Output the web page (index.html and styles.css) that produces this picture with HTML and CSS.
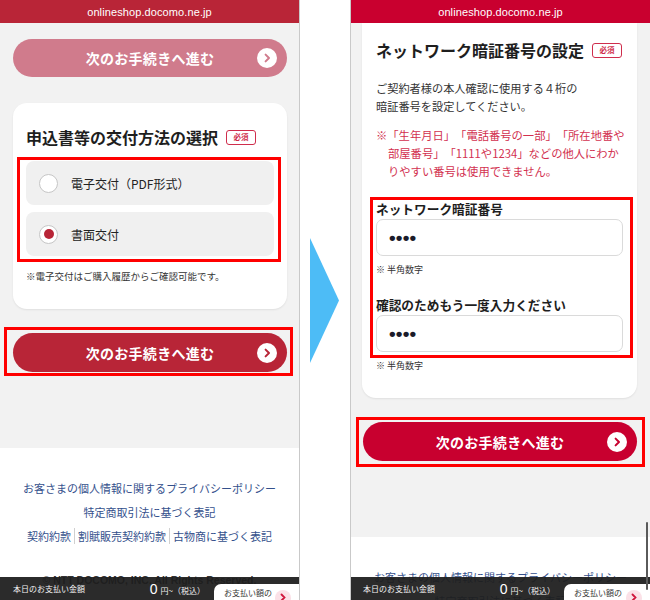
FILE: index.html
```html
<!DOCTYPE html>
<html lang="ja">
<head>
<meta charset="utf-8">
<title>docomo online shop</title>
<link rel="stylesheet" href="styles.css">
</head>
<body>
<div class="stage">
  <section class="phone phone-a">
    <header class="urlbar">onlineshop.docomo.ne.jp</header>
    <div class="content content-a">
      <button class="next faded" type="button">
        <span class="next-label">次のお手続きへ進む</span>
        <svg class="next-icon" viewBox="0 0 20 20" width="20" height="20"><circle cx="10" cy="10" r="10" fill="#fff"/><path d="M8.6 6.6 L12 10 L8.6 13.4" fill="none" stroke="currentColor" stroke-width="2" stroke-linecap="round" stroke-linejoin="round"/></svg>
      </button>
      <div class="card card-a">
        <h2 class="card-title">申込書等の交付方法の選択<span class="req">必須</span></h2>
        <div class="mark mark-options">
          <label class="option"><span class="radio"></span>電子交付（PDF形式）</label>
          <label class="option"><span class="radio on"></span>書面交付</label>
        </div>
        <p class="small-note">※電子交付はご購入履歴からご確認可能です。</p>
      </div>
      <div class="mark mark-btn-a">
        <button class="next main-a" type="button">
          <span class="next-label">次のお手続きへ進む</span>
          <svg class="next-icon" viewBox="0 0 20 20" width="20" height="20"><circle cx="10" cy="10" r="10" fill="#fff"/><path d="M8.6 6.6 L12 10 L8.6 13.4" fill="none" stroke="currentColor" stroke-width="2" stroke-linecap="round" stroke-linejoin="round"/></svg>
        </button>
      </div>
    </div>
    <footer class="site-footer">
      <p class="f-line"><a>お客さまの個人情報に関するプライバシーポリシー</a></p>
      <p class="f-line"><a>特定商取引法に基づく表記</a></p>
      <p class="f-line"><a>契約約款</a><span class="sep"></span><a>割賦販売契約約款</a><span class="sep"></span><a>古物商に基づく表記</a></p>
      <p class="copy">© NTT DOCOMO, INC. All Rights Reserved.</p>
    </footer>
    <div class="paybar">
      <span class="pay-label">本日のお支払い金額</span>
      <span class="pay-price"><b>0</b> 円~（税込）</span>
      <span class="pay-tab">お支払い額の<span class="pay-go"><svg viewBox="0 0 16 16" width="16" height="16"><path d="M6.5 4.5 L9.5 7.5 L6.5 10.5" fill="none" stroke="#d0163c" stroke-width="1.8" stroke-linecap="round"/></svg></span></span>
    </div>
  </section>

  <div class="arrow">
    <svg viewBox="0 0 29 125" width="29" height="125"><polygon points="0,0 29,62.5 0,125" fill="#4dbcf6"/></svg>
  </div>

  <section class="phone phone-b">
    <header class="urlbar">onlineshop.docomo.ne.jp</header>
    <div class="content content-b">
      <div class="card card-b">
        <h2 class="card-title">ネットワーク暗証番号の設定<span class="req">必須</span></h2>
        <p class="desc">ご契約者様の本人確認に使用する４桁の<br>暗証番号を設定してください。</p>
        <p class="warn">※「生年月日」「電話番号の一部」「所在地番や<br>部屋番号」「1111や1234」などの他人にわか<br>りやすい番号は使用できません。</p>
        <div class="mark mark-fields">
          <p class="field-label">ネットワーク暗証番号</p>
          <div class="field"><span class="dots">••••</span></div>
          <p class="help">※ 半角数字</p>
          <p class="field-label second">確認のためもう一度入力ください</p>
          <div class="field"><span class="dots">••••</span></div>
        </div>
        <p class="help help-out">※ 半角数字</p>
      </div>
      <div class="mark mark-btn-b">
        <button class="next main-b" type="button">
          <span class="next-label">次のお手続きへ進む</span>
          <svg class="next-icon" viewBox="0 0 20 20" width="20" height="20"><circle cx="10" cy="10" r="10" fill="#fff"/><path d="M8.6 6.6 L12 10 L8.6 13.4" fill="none" stroke="currentColor" stroke-width="2" stroke-linecap="round" stroke-linejoin="round"/></svg>
        </button>
      </div>
    </div>
    <footer class="site-footer">
      <p class="f-line"><a>お客さまの個人情報に関するプライバシーポリシー</a></p>
      <p class="f-line"><a>特定商取引法に基づく表記</a></p>
    </footer>
    <div class="paybar">
      <span class="pay-label">本日のお支払い金額</span>
      <span class="pay-price"><b>0</b> 円~（税込）</span>
      <span class="pay-tab">お支払い額の<span class="pay-go"><svg viewBox="0 0 16 16" width="16" height="16"><path d="M6.5 4.5 L9.5 7.5 L6.5 10.5" fill="none" stroke="#d0163c" stroke-width="1.8" stroke-linecap="round"/></svg></span></span>
    </div>
    <div class="scrollbar"></div>
  </section>
</div>
</body>
</html>
```

FILE: styles.css
```css
* { box-sizing: border-box; }
html, body { margin: 0; padding: 0; }
body {
  width: 650px;
  height: 600px;
  overflow: hidden;
  background: #fff;
  font-family: "Noto Sans CJK JP", "Noto Sans", sans-serif;
  color: #222;
  text-spacing-trim: space-all;
}
p, h2 { margin: 0; }

.stage { display: flex; width: 650px; height: 600px; }

.phone {
  position: relative;
  width: 300px;
  height: 600px;
  overflow: hidden;
  background: #f2f2f2;
  display: flex;
  flex-direction: column;
  flex: none;
}
.phone-a { border-right: 1px solid #c9c9c9; }
.phone-b { border-left: 1px solid #c9c9c9; }

.urlbar {
  flex: none;
  height: 23px;
  display: flex;
  align-items: center;
  justify-content: center;
  color: #fff;
  font: 11px "Liberation Sans", Arial, sans-serif;
  letter-spacing: 0.1px;
}
.phone-a .urlbar { background: #b92537; }
.phone-b .urlbar { background: #c9002f; }

.arrow {
  width: 50px;
  flex: none;
  display: flex;
  align-items: center;
  padding-left: 10px;
}

/* content columns */
.content { flex: none; }
.content-a { padding: 16px 12px 72px 13px; }
.content-b { padding: 0 13px 70px 11px; }

/* buttons */
.next {
  display: grid;
  grid-template-columns: 1fr auto 1fr;
  align-items: center;
  width: 100%;
  border: 0;
  padding: 0 10px;
  color: #fff;
  font: 700 14px "Noto Sans CJK JP", sans-serif;
  letter-spacing: 0.3px;
}
.next-label { grid-column: 2; }
.next-icon { grid-column: 3; justify-self: end; display: block; }
.faded { height: 38px; border-radius: 19px; background: #d07b8c; color: #fff; }
.faded .next-icon { color: #d07b8c; }
.main-a { height: 39px; border-radius: 20px; background: #b82537; }
.main-a .next-icon { color: #b82537; }
.main-b { height: 39px; border-radius: 20px; background: #c8002f; }
.main-b .next-icon { color: #c8002f; }

/* cards */
.card {
  background: #fff;
  box-shadow: 0 1px 2px rgba(0, 0, 0, 0.08);
}
.card-a {
  margin-top: 26px;
  border-radius: 14px;
  padding: 24px 13px 26px 13px;
}
.card-b {
  border-radius: 0 0 14px 14px;
  padding: 17px 14px 25px 14px;
}
.card-title {
  display: flex;
  align-items: center;
  gap: 8px;
  font-size: 16px;
  line-height: 20px;
  font-weight: 700;
  color: #1e1e1e;
  white-space: nowrap;
}
.req {
  display: inline-flex;
  align-items: center;
  justify-content: center;
  width: 30px;
  height: 15px;
  border: 1.5px solid #cf2d4c;
  border-radius: 3px;
  color: #cf2d4c;
  font-size: 7.5px;
  font-weight: 700;
  line-height: 1;
  background: #fff;
}

/* red highlight frames */
.mark { border: 3px solid #ff0000; }
.mark-options {
  margin: 10px -7px 0 -9px;
  padding: 1px 4px 3px 6px;
  display: flex;
  flex-direction: column;
  gap: 7px;
}
.mark-btn-a {
  margin: 18px -6px 0 -9px;
  padding: 3px 3px 1px 6px;
}
.mark-fields {
  margin: 17px -10px 0 -6px;
  padding: 0 7px 3px 3px;
}
.mark-btn-b {
  margin: 19px -8px 0 -6px;
  padding: 2px 5px 3px 4px;
}

/* radio options */
.option {
  display: flex;
  align-items: center;
  gap: 13px;
  height: 44px;
  padding-left: 13px;
  background: #f0f0f0;
  border-radius: 8px;
  font-size: 12px;
  color: #222;
}
.radio {
  width: 19px;
  height: 19px;
  border: 1.5px solid #c6c6c6;
  border-radius: 50%;
  background: #fff;
  display: grid;
  place-items: center;
}
.radio.on::after {
  content: "";
  width: 10px;
  height: 10px;
  border-radius: 50%;
  background: #b82537;
}
.small-note {
  margin-top: 7px;
  font-size: 9.5px;
  line-height: 14px;
  color: #333;
  white-space: nowrap;
}

/* right form */
.desc {
  margin-top: 19px;
  font-size: 11.2px;
  line-height: 18px;
  color: #333;
  white-space: nowrap;
}
.warn {
  margin-top: 11px;
  font-size: 11.3px;
  line-height: 18px;
  color: #d2314f;
  padding-left: 12px;
  text-indent: -12px;
  white-space: nowrap;
}
.field-label {
  font-size: 12.7px;
  font-weight: 700;
  line-height: 18px;
  color: #1e1e1e;
  white-space: nowrap;
}
.field-label.second { margin-top: 19px; }
.field {
  margin-top: 1px;
  height: 37px;
  border: 1.5px solid #dadada;
  border-radius: 7px;
  background: #fff;
  display: flex;
  align-items: center;
  padding-left: 12px;
}
.dots {
  font: 700 19px "Liberation Sans", Arial, sans-serif;
  color: #1b1b2a;
  letter-spacing: 0.2px;
  line-height: 1;
}
.help {
  margin-top: 7px;
  font-size: 9px;
  line-height: 14px;
  color: #333;
}
.help-out { margin-top: 1px; }

/* footer */
.site-footer {
  flex: 1 0 auto;
  background: #fff;
  padding-top: 28px;
  text-align: center;
}
.f-line {
  display: flex;
  justify-content: center;
  align-items: center;
  font-size: 11px;
  line-height: 24px;
  color: #34508c;
  white-space: nowrap;
}
.sep {
  width: 1px;
  height: 16px;
  background: #d0d0d0;
  margin: 0 3px;
}
.copy {
  margin-top: 25px;
  font: 700 10.5px/14px "Liberation Sans", Arial, sans-serif;
  color: #333;
}

/* bottom pay bar (fixed overlay) */
.paybar {
  position: absolute;
  left: 0;
  right: 0;
  bottom: 0;
  height: 23px;
  background: rgba(30, 30, 30, 0.94);
  display: flex;
  align-items: center;
  padding-left: 13px;
  color: #f2f2f2;
}
.phone-b .paybar { padding-left: 12px; }
.pay-label { font-size: 8px; white-space: nowrap; }
.pay-price {
  margin-left: auto;
  margin-right: 9px;
  font-size: 8px;
  white-space: nowrap;
  display: flex;
  align-items: baseline;
  gap: 3px;
}
.pay-price b {
  font: 400 14px "Liberation Sans", Arial, sans-serif;
  color: #fff;
}
.pay-tab {
  align-self: flex-end;
  width: 85px;
  height: 16px;
  background: #fff;
  border-radius: 7px 0 0 0;
  color: #333;
  font-size: 8px;
  display: flex;
  align-items: flex-start;
  padding: 3px 0 0 10px;
  overflow: hidden;
  white-space: nowrap;
}
.phone-b .pay-tab { width: 86px; }
.pay-go {
  margin-left: auto;
  margin-right: 8px;
  margin-top: 3px;
  width: 16px;
  height: 16px;
  border-radius: 50%;
  background: #fbe1e7;
  display: block;
  flex: none;
}
.pay-go svg { display: block; }

.scrollbar {
  position: absolute;
  right: 2px;
  top: 522px;
  width: 2px;
  height: 68px;
  border-radius: 1px;
  background: #5a5a5a;
}
```
